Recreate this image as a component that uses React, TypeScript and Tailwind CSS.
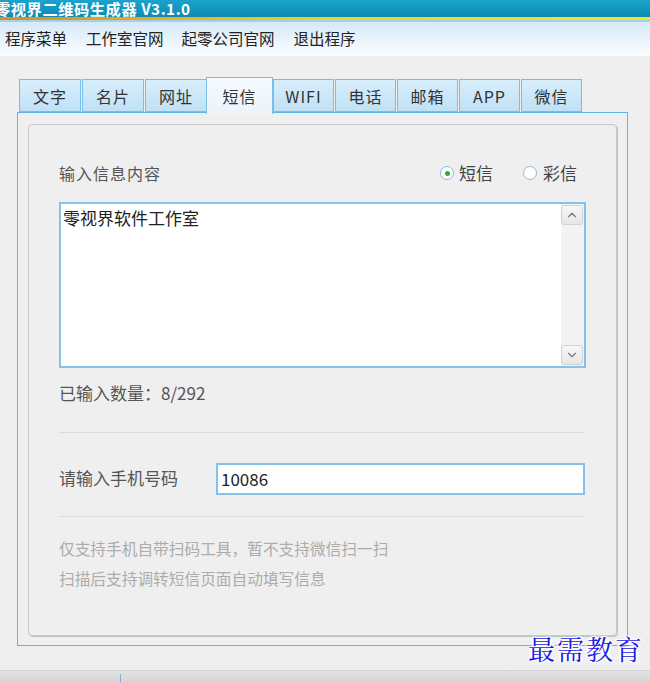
import { ChevronUp, ChevronDown } from 'lucide-react'

const tabs = ['文字', '名片', '网址', '短信', 'WIFI', '电话', '邮箱', 'APP', '微信']

const font = { fontFamily: '"Noto Sans CJK SC", "Noto Sans", sans-serif' }

export default function App() {
	return (
		<div
			className="relative w-[650px] h-[682px] overflow-hidden bg-[#efefef] text-[#333]"
			style={font}
		>
			{/* 标题栏 */}
			<div className="h-[17px] bg-gradient-to-b from-[#1aa3cc] to-[#0b8bb4] flex items-center">
				<span className="ml-[-5px] text-white font-bold text-[15.3px] leading-none tracking-[0.5px]">
					零视界二维码生成器 V3.1.0
				</span>
			</div>
			<div className="h-[3px] bg-gradient-to-r from-[#e08a1a] via-[#f2d21a] to-[#f6e81c]" />
			<div className="h-[2px] bg-[#9fd2ee]" />

			{/* 菜单 */}
			<div className="h-[34px] bg-gradient-to-b from-[#d6e9f7] to-[#fbfdff] flex items-center text-[15.5px] text-[#222]">
				<span className="ml-[5px]">程序菜单</span>
				<span className="ml-[19px]">工作室官网</span>
				<span className="ml-[18px]">起零公司官网</span>
				<span className="ml-[19px]">退出程序</span>
			</div>

			{/* 选项卡 */}
			<div className="ml-[19px] mt-[21px] flex items-end h-[35px] relative z-10 text-[16px] tracking-[1px]">
				{tabs.map((t, i) =>
					t === '短信' ? (
						<div
							key={t}
							className="w-[67px] h-[37px] mb-[-2px] ml-[-1px] border border-[#7cbde8] border-b-0 bg-gradient-to-b from-[#f6fbfe] to-[#eaf4fb] flex items-center justify-center"
						>
							{t}
						</div>
					) : (
						<div
							key={t}
							className={
								i < 3
									? 'w-[62px] h-[33px] border border-[#7cbde8] bg-gradient-to-b from-[#d9eefb] to-[#bfe1f6] flex items-center justify-center ml-[1px] first:ml-0'
									: i === 4
										? 'w-[61px] h-[33px] border border-[#7cbde8] bg-gradient-to-b from-[#d9eefb] to-[#bfe1f6] flex items-center justify-center'
										: 'w-[61px] h-[33px] border border-[#7cbde8] bg-gradient-to-b from-[#d9eefb] to-[#bfe1f6] flex items-center justify-center ml-[1px]'
							}
						>
							{t}
						</div>
					)
				)}
			</div>

			{/* 面板 */}
			<div className="ml-[17px] w-[611px] h-[534px] border border-[#62b1e8] pt-[11px] pl-[10px]">
				<div className="w-[589px] h-[512px] rounded-[4px] border border-[#c9c9c9] shadow-[1px_1px_0_#c0c0c0] pl-[30px] pr-[30px] pt-[37px]">
					<div className="flex items-center justify-between h-[22px] text-[16px] tracking-[1px] text-[#555]">
						<span>输入信息内容</span>
						<div className="flex items-center mr-[9px] text-[17px] tracking-normal">
							<span className="w-[14px] h-[14px] rounded-full border border-[#8fb6dc] bg-white flex items-center justify-center">
								<span className="w-[5px] h-[5px] rounded-full bg-[#2eae2e]" />
							</span>
							<span className="ml-[5px] text-[#444]">短信</span>
							<span className="ml-[30px] w-[14px] h-[14px] rounded-full border border-[#8fb6dc] bg-white" />
							<span className="ml-[6px] text-[#444]">彩信</span>
						</div>
					</div>

					<div className="mt-[18px] w-[527px] h-[166px] border-2 border-[#86c1ea] bg-white flex">
						<div className="flex-1 pl-[2px] pt-[2px] text-[17px] text-[#222] leading-[24px]">
							零视界软件工作室
						</div>
						<div className="w-[23px] bg-[#f3f3f3] flex flex-col justify-between py-[1px] pr-[1px]">
							<div className="h-[20px] rounded-[3px] border border-[#d2d2d2] bg-gradient-to-b from-[#f7f7f7] to-[#e6e6e6] flex items-center justify-center">
								<ChevronUp size={14} strokeWidth={2} className="text-[#777]" />
							</div>
							<div className="h-[20px] rounded-[3px] border border-[#d2d2d2] bg-gradient-to-b from-[#f7f7f7] to-[#e6e6e6] flex items-center justify-center">
								<ChevronDown size={14} strokeWidth={2} className="text-[#777]" />
							</div>
						</div>
					</div>

					<div className="mt-[14px] text-[17px] text-[#555] leading-[22px]">
						已输入数量：8/292
					</div>
					<div className="mt-[28px] w-[525px] h-px bg-[#dadada]" />

					<div className="mt-[30px] flex items-center">
						<span className="w-[157px] text-[17px] text-[#555] mt-[-3px]">请输入手机号码</span>
						<div className="w-[369px] h-[32px] border-2 border-[#86c1ea] bg-white flex items-center pl-[3px] text-[17px] text-[#222]">
							10086
						</div>
					</div>
					<div className="mt-[21px] w-[525px] h-px bg-[#dadada]" />

					<div className="mt-[21px] text-[15.7px] text-[#acacac] leading-[22px]">
						仅支持手机自带扫码工具，暂不支持微信扫一扫
					</div>
					<div className="mt-[8px] text-[15.7px] text-[#acacac] leading-[22px]">
						扫描后支持调转短信页面自动填写信息
					</div>
				</div>
			</div>

			{/* 状态栏 */}
			<div className="absolute left-0 right-0 bottom-0 h-[12px] border-t border-[#d4d4d4] bg-gradient-to-b from-[#e2e2e2] to-[#d6d6d6]">
				<div className="ml-[120px] mt-[3px] w-px h-[9px] bg-[#7bb5de]" />
			</div>

			{/* 水印 */}
			<div
				className="absolute left-[528px] top-[635px] text-[27px] leading-none text-[#1a1ae6] tracking-[2px]"
				style={{
					fontFamily: '"Noto Serif CJK SC", "Noto Sans CJK SC", serif',
					textShadow:
						'1px 1px 0 #fff, -1px -1px 0 #fff, 1px -1px 0 #fff, -1px 1px 0 #fff, 2px 0 2px #fff, -2px 0 2px #fff',
				}}
			>
				最需教育
			</div>
		</div>
	)
}
